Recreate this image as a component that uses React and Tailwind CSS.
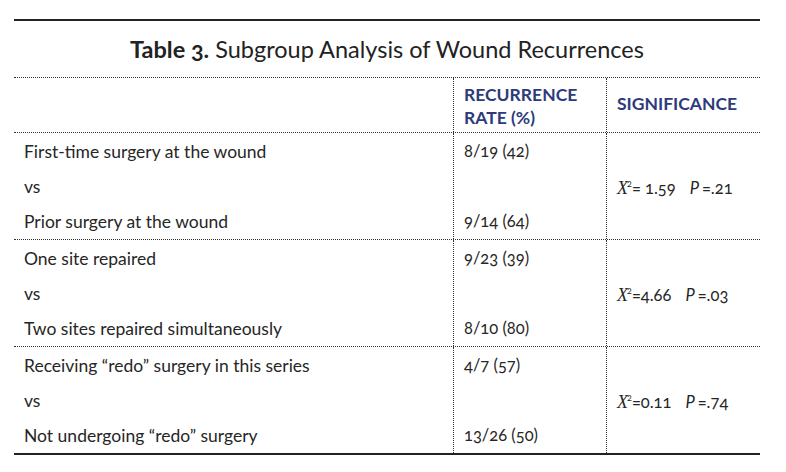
import React from 'react'

const groups = [
  {
    rows: ['First-time surgery at the wound', 'vs', 'Prior surgery at the wound'],
    rates: ['8/19 (42)', '', '9/14 (64)'],
    chi: '= 1.59',
    p: '=.21',
  },
  {
    rows: ['One site repaired', 'vs', 'Two sites repaired simultaneously'],
    rates: ['9/23 (39)', '', '8/10 (80)'],
    chi: '=4.66',
    p: '=.03',
  },
  {
    rows: ['Receiving “redo” surgery in this series', 'vs', 'Not undergoing “redo” surgery'],
    rates: ['4/7 (57)', '', '13/26 (50)'],
    chi: '=0.11',
    p: '=.74',
  },
]

function Group({ group }) {
  return (
    <div className="grid grid-cols-[439px_153px_154px] border-t border-dotted border-[#333]">
      <div className="pl-[10px] pt-[1px]">
        {group.rows.map((r, i) => (
          <div key={i} className="h-[35px] leading-[35px]">{r}</div>
        ))}
      </div>
      <div className="border-l border-dotted border-[#333] pl-[10px] pt-[1px] text-[16.5px] oldstyle-nums">
        {group.rates.map((r, i) => (
          <div key={i} className="h-[35px] leading-[35px]">{r}</div>
        ))}
      </div>
      <div className="border-l border-dotted border-[#333] pl-[10px] flex items-center pt-[4px] text-[16.5px] oldstyle-nums">
        <span className="font-['Liberation_Serif',serif] italic text-[18px]">X</span>
        <sup className="text-[9px] -ml-[1px]">2</sup>
        <span>{group.chi}</span>
        <span className="ml-[14px] italic">P</span>
        <span className="ml-[3px]">{group.p}</span>
      </div>
    </div>
  )
}

export default function App() {
  return (
    <div className="bg-white w-[786px] h-[472px] pt-[19px] font-['Lato','Open_Sans',sans-serif] text-[17.5px] text-[#262626]">
      <div className="ml-[14px] w-[746px]">
        <div className="border-t-[2px] border-[#222] h-[58px] flex items-center justify-center pt-[2px]">
          <h1 className="text-[23.5px] text-[#222] oldstyle-nums">
            <span className="font-bold">Table 3.</span> Subgroup Analysis of Wound Recurrences
          </h1>
        </div>
        <div className="grid grid-cols-[439px_153px_154px] h-[55px] border-t border-dotted border-[#333] font-bold text-[#2d3a7c] text-[17.5px]">
          <div />
          <div className="border-l border-dotted border-[#333] pl-[10px] flex items-center leading-[23px] pt-[1px]">
            <span>RECURRENCE<br />RATE (%)</span>
          </div>
          <div className="border-l border-dotted border-[#333] pl-[10px] flex items-center pb-[2px]">
            SIGNIFICANCE
          </div>
        </div>
        {groups.map((g, i) => (
          <Group key={i} group={g} />
        ))}
        <div className="border-t-[2px] border-[#222]" />
      </div>
    </div>
  )
}
